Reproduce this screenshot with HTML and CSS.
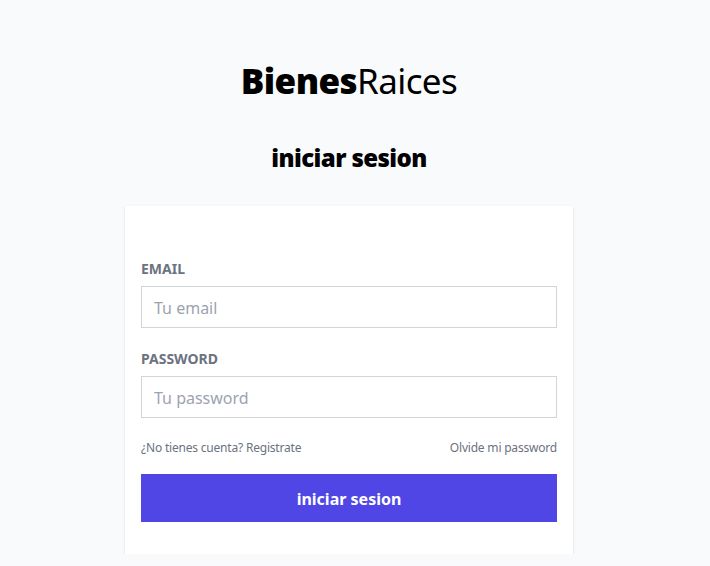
FILE: index.html
```html
<!DOCTYPE html>
<html lang="es">
<head>
<meta charset="utf-8">
<title>Iniciar sesion</title>
<link rel="stylesheet" href="styles.css">
</head>
<body>
<main class="page">
  <h1 class="brand"><span class="brand-bold">Bienes</span>Raices</h1>
  <h2 class="title">iniciar sesion</h2>
  <div class="card">
    <form class="form">
      <div class="field">
        <label class="label" for="email">Email</label>
        <input class="input" id="email" type="email" placeholder="Tu email">
      </div>
      <div class="field">
        <label class="label" for="password">Password</label>
        <input class="input" id="password" type="password" placeholder="Tu password">
      </div>
      <div class="links">
        <a class="link" href="#">¿No tienes cuenta? Registrate</a>
        <a class="link" href="#">Olvide mi password</a>
      </div>
      <button class="btn" type="button">iniciar sesion</button>
    </form>
  </div>
</main>
</body>
</html>
```
FILE: styles.css
```css
* { box-sizing: border-box; }
html, body { margin: 0; padding: 0; }
body {
  background: #f9fafb;
  font-family: "Noto Sans", "Open Sans", sans-serif;
  color: #000;
}
.page {
  padding: 61px 12px 0 0;
}
.brand {
  margin: 0;
  text-align: center;
  font-size: 35px;
  line-height: 40px;
  font-weight: 400;
  letter-spacing: -0.6px;
}
.brand-bold {
  font-family: "Open Sans", "Noto Sans", sans-serif;
  font-weight: 800;
}
.title {
  margin: 41px 0 0;
  text-align: center;
  font-family: "Open Sans", "Noto Sans", sans-serif;
  font-size: 24px;
  line-height: 32px;
  font-weight: 800;
  letter-spacing: -0.6px;
}
.card {
  width: 448px;
  margin: 32px auto 0;
  background: #fff;
  padding: 32px 16px;
  box-shadow: 0 1px 3px 0 rgba(0,0,0,0.1), 0 1px 2px -1px rgba(0,0,0,0.1);
}
.form {
  display: flex;
  flex-direction: column;
  gap: 20px;
  margin-top: 20px;
}
.field { display: flex; flex-direction: column; }
.label {
  font-size: 14px;
  line-height: 20px;
  font-weight: 700;
  text-transform: uppercase;
  color: #6b7280;
  padding-top: 1px;
  margin-bottom: 7px;
}
.input {
  height: 42px;
  width: 100%;
  padding: 9px 12px 7px;
  border: 1px solid #d1d5db;
  font-family: inherit;
  font-size: 16px;
  line-height: 24px;
  color: #111827;
  background: #fff;
  outline: none;
}
.input::placeholder { color: #9ca3af; }
.links {
  display: flex;
  justify-content: space-between;
  font-size: 12px;
  line-height: 16px;
  letter-spacing: -0.2px;
  padding-top: 2px;
  margin-bottom: -2px;
}
.link { color: #6b7280; text-decoration: none; }
.btn {
  height: 48px;
  border: 0;
  background: #4f46e5;
  color: #fff;
  font-family: inherit;
  font-size: 16px;
  font-weight: 700;
  padding-top: 2px;
  cursor: pointer;
}
```
